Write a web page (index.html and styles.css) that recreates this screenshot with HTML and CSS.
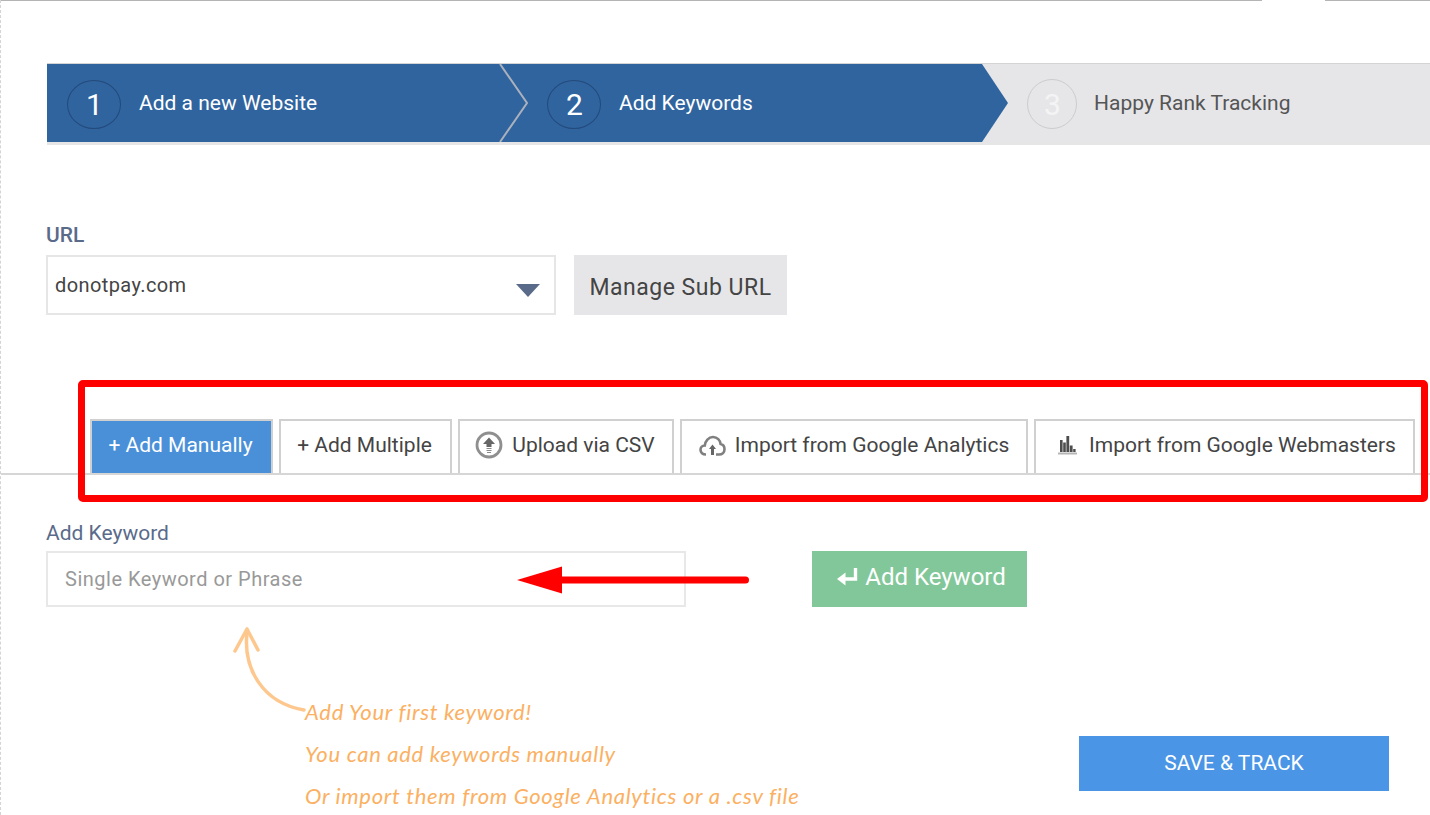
FILE: index.html
```html
<!DOCTYPE html>
<html lang="en">
<head>
<meta charset="utf-8">
<title>Add Keywords</title>
<link rel="stylesheet" href="styles.css">
</head>
<body>
<div class="top-rule"><span class="rule-a"></span><span class="rule-b"></span></div>

<nav class="stepper">
  <div class="steps-done">
    <div class="step"><span class="num">1</span><span class="step-label">Add a new Website</span></div>
    <div class="step"><span class="num">2</span><span class="step-label">Add Keywords</span></div>
    <svg class="chevron" width="32" height="78" viewBox="0 0 32 78"><path d="M1 0L28 39L1 78" fill="none" stroke="#aab1bd" stroke-width="2"/></svg>
  </div>
  <div class="step step-todo"><span class="num">3</span><span class="step-label">Happy Rank Tracking</span></div>
</nav>

<section class="url-block">
  <div class="field-title">URL</div>
  <div class="url-row">
    <div class="select"><span>donotpay.com</span><i class="caret"></i></div>
    <button class="btn-manage">Manage Sub URL</button>
  </div>
</section>

<div class="tabs">
  <div class="tab tab-active">+ Add Manually</div>
  <div class="tab tab-multiple">+ Add Multiple</div>
  <div class="tab tab-upload">
    <svg class="ico" width="28" height="28" viewBox="0 0 28 28"><circle cx="14" cy="14" r="12" fill="#fff" stroke="#8f8f8f" stroke-width="2.8"/><path d="M14 6.500L20 13H16.500V16H11.500V13H8Z" fill="#666"/><path d="M11.500 17.500H16.500M11.500 19.500H16.500M12 21.500H16" stroke="#888" stroke-width="1.200"/></svg>
    Upload via CSV
  </div>
  <div class="tab tab-analytics">
    <svg class="ico" width="27" height="21" viewBox="0 0 27 21"><path d="M7 19.500C3.500 19.500 1.500 17.500 1.500 14.800C1.500 12.300 3.400 10.600 5.800 10.500C6.200 6 9.600 2 14 2C18.300 2 21.200 5.400 21.600 9C24 9.400 25.500 11.600 25.500 14.200C25.500 17.200 23.400 19.500 20 19.500H17" fill="none" stroke="#808080" stroke-width="2.600"/><path d="M13.500 9.500L17 14H15V20H12V14H10Z" fill="#666"/></svg>
    Import from Google Analytics
  </div>
  <div class="tab tab-webmasters">
    <svg class="ico ico-bars" width="19" height="20" viewBox="0 0 19 20"><path d="M2 5h2.600v12H2zM5.200 7.500h2.600V17H5.200zM8.400 1h2.800v16H8.400zM11.800 10.500h2.800V17h-2.800zM15.200 14h2.400v3h-2.400z" fill="#4d4d4d"/><path d="M0 18.500H19" stroke="#b5b5b5" stroke-width="2"/></svg>
    Import from Google Webmasters
  </div>
  <div class="red-box"></div>
</div>

<section class="keyword-block">
  <label class="kw-title">Add Keyword</label>
  <div class="kw-row">
    <div class="kw-input">Single Keyword or Phrase</div>
    <button class="btn-add">
      <svg width="23" height="20" viewBox="0 0 23 20"><path d="M19.500 1V12H7" fill="none" stroke="#fff" stroke-width="3.400"/><path d="M9.500 5.500L1 12L9.500 18.500Z" fill="#fff"/></svg>
      Add Keyword
    </button>
    <svg class="red-arrow" width="232" height="30" viewBox="0 0 232 30"><path d="M45 15H228.500" stroke="#ff0000" stroke-width="7" stroke-linecap="round"/><path d="M0 15L45 1.500V28.500Z" fill="#ff0000"/></svg>
  </div>
</section>

<section class="bottom">
  <div class="hint">
    <svg class="hint-arrow" width="74" height="88" viewBox="0 0 74 88"><g fill="none" stroke="#fdc78d" stroke-width="3.500" stroke-linecap="round"><path d="M14 6C10 42 30 76 71 83"/><path d="M14 2L2 24M14 2L25 23"/></g></svg>
    <div class="hint-text">
      <p>Add Your first keyword!</p>
      <p>You can add keywords manually</p>
      <p>Or import them from Google Analytics or a .csv file</p>
    </div>
  </div>
  <button class="btn-save">SAVE &amp; TRACK</button>
</section>
</body>
</html>
```

FILE: styles.css
```css
* { box-sizing: border-box; }
html, body { margin: 0; padding: 0; }
body {
  width: 1430px;
  height: 815px;
  overflow: hidden;
  background: #fff;
  font-family: Roboto, "Liberation Sans", sans-serif;
  color: #444;
  border-left: 1px dashed #d4d4d4;
}
button { font-family: inherit; border: 0; padding: 0; }

.top-rule { display: flex; height: 1px; margin-left: -1px; }
.rule-a { width: 1262px; background: #b4b4b4; }
.rule-b { width: 105px; margin-left: 63px; background: #b4b4b4; }

.stepper {
  display: flex;
  height: 82px;
  margin: 62px 0 0 46px;
  background: #e6e6e9;
  border-top: 1px solid #d4d4d4;
  border-bottom: 3px solid #e6e6e6;
}
.steps-done {
  position: relative;
  display: flex;
  flex: none;
  width: 961px;
  background: #30649f;
  clip-path: polygon(0 0, 935px 0, 961px 50%, 935px 100%, 0 100%);
}
.chevron { position: absolute; left: 452px; top: 0; }
.step {
  display: flex;
  align-items: center;
  width: 480px;
  flex: none;
  padding-left: 20px;
  color: #fff;
}
.num {
  display: flex;
  align-items: center;
  justify-content: center;
  width: 54px;
  height: 49px;
  margin-top: 2px;
  padding-left: 1px;
  border: 1px solid #24497a;
  border-radius: 50%;
  font-size: 30px;
}
.step-label { margin-left: 18px; font-size: 21px; line-height: 24px; }
.step-todo { flex: 1; width: auto; padding-left: 19px; color: #555; }
.step-todo .num { width: 50px; height: 50px; border-color: #ccc; color: #f4f4f4; }
.step-todo .step-label { margin-left: 17px; }

.url-block { margin: 79px 0 0 45px; }
.field-title {
  color: #5a6b8a;
  font-size: 21px;
  font-weight: 500;
  line-height: 22px;
}
.url-row { display: flex; gap: 18px; margin-top: 9px; }
.select {
  position: relative;
  width: 510px;
  height: 60px;
  padding: 17px 7px;
  border: 2px solid #e6e6e6;
  font-size: 20px;
  line-height: 22px;
  letter-spacing: 0.4px;
}
.caret {
  position: absolute;
  right: 14px;
  top: 27px;
  border-top: 13px solid #5a6b8a;
  border-left: 12px solid transparent;
  border-right: 12px solid transparent;
}
.btn-manage {
  width: 213px;
  height: 60px;
  padding-top: 4px;
  background: #e6e6e9;
  color: #444;
  font-size: 23px;
  letter-spacing: 0.5px;
}

.tabs {
  position: relative;
  display: flex;
  gap: 6px;
  height: 56px;
  margin: 104px 0 0 -1px;
  padding-left: 90px;
  border-bottom: 2px solid #d6d6d6;
}
.tab {
  display: flex;
  align-items: center;
  justify-content: center;
  height: 54px;
  padding: 0 2px 4px 0;
  border: 2px solid #d0d0d0;
  border-bottom: 0;
  background: #fff;
  font-size: 21px;
  white-space: nowrap;
}
.tab-active { width: 183px; background: #4a90d9; color: #fff; }
.tab-multiple { width: 173px; }
.tab-upload { width: 216px; }
.tab-analytics { width: 348px; padding-right: 0; }
.tab-webmasters { width: 381px; padding-right: 0; }
.ico { margin-right: 9px; flex: none; }
.ico-bars { margin: 0 12px 0 5px; }
.red-box {
  position: absolute;
  left: 78px;
  top: -39px;
  width: 1350px;
  height: 122px;
  border: 7px solid #ff0000;
  border-radius: 5px;
  pointer-events: none;
}

.keyword-block { margin: 46px 0 0 45px; }
.kw-title {
  display: block;
  color: #5a6b8a;
  font-size: 21px;
  line-height: 24px;
}
.kw-row { position: relative; display: flex; gap: 126px; margin-top: 6px; }
.kw-input {
  width: 640px;
  height: 56px;
  padding: 0 17px;
  border: 2px solid #e8e8e8;
  color: #999;
  font-size: 20px;
  line-height: 52px;
  letter-spacing: 0.5px;
}
.btn-add {
  display: flex;
  align-items: center;
  justify-content: center;
  gap: 6px;
  width: 215px;
  height: 56px;
  padding: 0 0 4px 3px;
  background: #82c799;
  color: #fff;
  font-size: 24px;
}
.red-arrow { position: absolute; left: 471px; top: 14px; }

.bottom { display: flex; align-items: flex-start; justify-content: space-between; padding-right: 41px; }
.hint { display: flex; align-items: flex-start; margin: 20px 0 0 232px; }
.hint-arrow { flex: none; margin-right: -2px; }
.hint-text {
  margin-top: 64px;
  color: #fbb062;
  font-family: Lato, sans-serif;
  font-style: italic;
  font-size: 22px;
  line-height: 42px;
  letter-spacing: 0.7px;
  white-space: nowrap;
}
.hint-text p { margin: 0; }
.btn-save {
  width: 310px;
  height: 55px;
  margin-top: 129px;
  padding-bottom: 2px;
  background: #4a95e6;
  color: #fff;
  font-size: 21px;
}
```
